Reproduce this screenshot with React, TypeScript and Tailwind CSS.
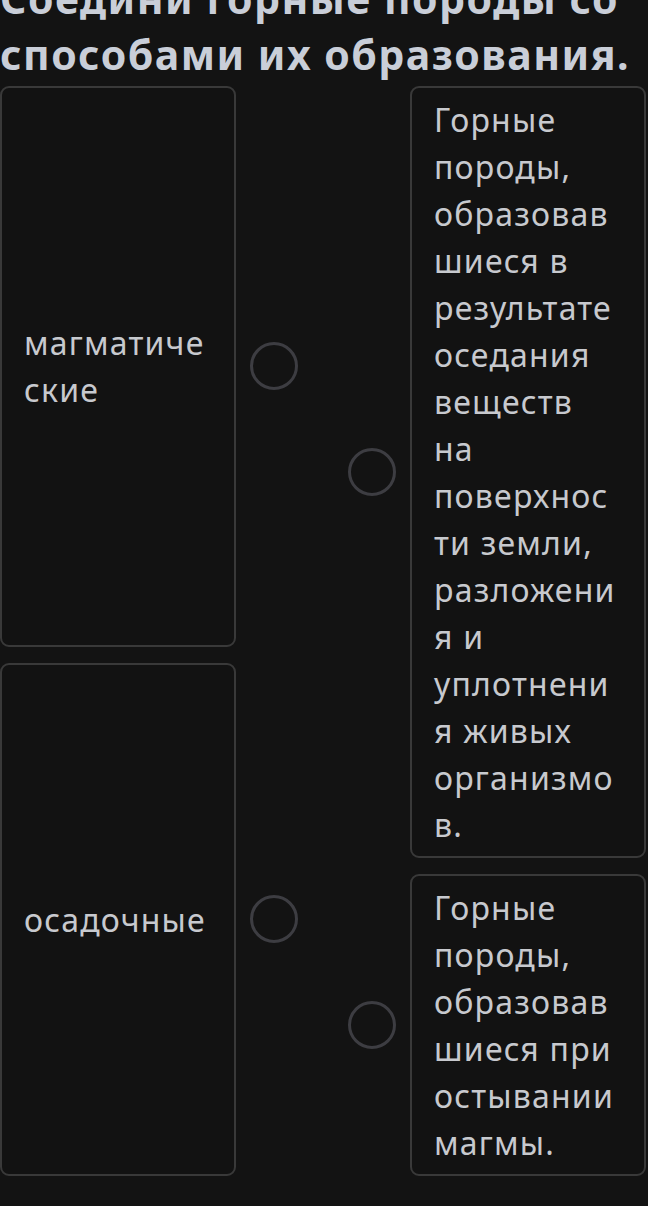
import React from 'react';

const leftItems = [
  ['магматиче', 'ские'],
  ['осадочные'],
];
const rightItems = [
  [
    'Горные',
    'породы,',
    'образовав',
    'шиеся в',
    'результате',
    'оседания',
    'веществ',
    'на',
    'поверхнос',
    'ти земли,',
    'разложени',
    'я и',
    'уплотнени',
    'я живых',
    'организмо',
    'в.',
  ],
  ['Горные', 'породы,', 'образовав', 'шиеся при', 'остывании', 'магмы.'],
];

function Dot() {
  return <div className="shrink-0 w-12 h-12 rounded-full border-[3px] border-[#3d3d42]" />;
}

function Lines({ lines }: { lines: string[] }) {
  return (
    <div className="min-w-0">
      {lines.map((l, i) => (
        <div key={i} className="whitespace-nowrap">
          {l}
        </div>
      ))}
    </div>
  );
}

export default function App() {
  return (
    <div
      className="min-h-screen bg-[#131313] overflow-hidden pr-[2px]"
      style={{ fontFamily: '"Noto Sans", "Open Sans", sans-serif' }}
    >
      {/* Title (page scrolled, first line cut) */}
      <h1 className="-mt-[30px] text-[41px] leading-[56px] font-bold tracking-[1.5px] text-[#c9ced8] whitespace-nowrap">
        Соедини горные породы со
        <br />
        способами их образования.
      </h1>

      <div className="mt-[4px] flex justify-between">
        {/* Left column */}
        <div className="flex flex-col gap-4">
          {leftItems.map((t, i) => (
            <div key={i} className="grow flex items-center gap-[14px]">
              <div className="self-stretch w-[236px] flex items-center px-[22px] py-[10px] border-2 border-[#393939] rounded-[9px] bg-[#121212] text-[32px] leading-[47px] tracking-[1.2px] text-[#c7c9ce]">
                <Lines lines={t} />
              </div>
              <Dot />
            </div>
          ))}
        </div>

        {/* Right column */}
        <div className="flex flex-col gap-4">
          {rightItems.map((t, i) => (
            <div key={i} className="flex items-center gap-[14px]">
              <Dot />
              <div className="w-[236px] px-[22px] py-2 border-2 border-[#393939] rounded-[9px] bg-[#121212] text-[32px] leading-[47px] tracking-[1.2px] text-[#c7c9ce]">
                <Lines lines={t} />
              </div>
            </div>
          ))}
        </div>
      </div>
    </div>
  );
}
